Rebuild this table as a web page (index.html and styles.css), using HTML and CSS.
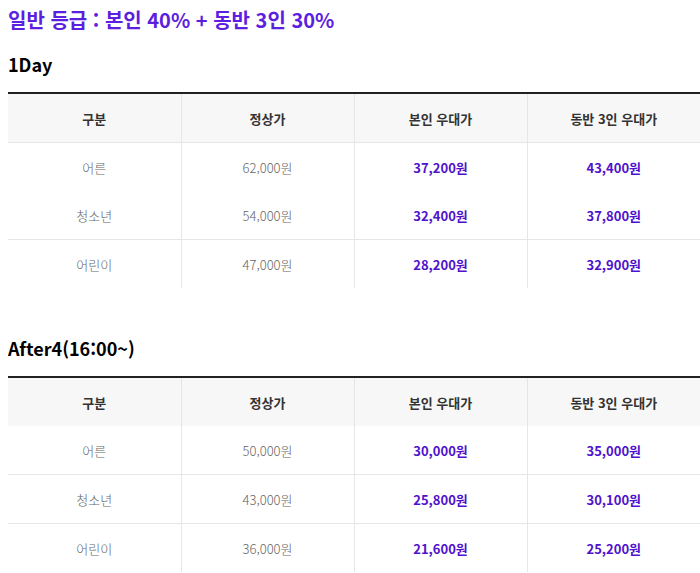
FILE: index.html
```html
<!DOCTYPE html>
<html lang="ko">
<head>
<meta charset="utf-8">
<title>요금 안내</title>
<link rel="stylesheet" href="styles.css">
</head>
<body>
<h2 class="grade-title">일반 등급 : 본인 40% + 동반 3인 30%</h2>

<h3 class="section-title">1Day</h3>
<table class="price-table">
  <thead>
    <tr class="head-row lined">
      <th>구분</th><th>정상가</th><th>본인 우대가</th><th>동반 3인 우대가</th>
    </tr>
  </thead>
  <tbody>
    <tr><td>어른</td><td>62,000원</td><td class="deal">37,200원</td><td class="deal">43,400원</td></tr>
    <tr class="lined"><td>청소년</td><td>54,000원</td><td class="deal">32,400원</td><td class="deal">37,800원</td></tr>
    <tr><td>어린이</td><td>47,000원</td><td class="deal">28,200원</td><td class="deal">32,900원</td></tr>
  </tbody>
</table>

<h3 class="section-title section-title--gap">After4(16:00~)</h3>
<table class="price-table">
  <thead>
    <tr class="head-row">
      <th>구분</th><th>정상가</th><th>본인 우대가</th><th>동반 3인 우대가</th>
    </tr>
  </thead>
  <tbody>
    <tr class="lined"><td>어른</td><td>50,000원</td><td class="deal">30,000원</td><td class="deal">35,000원</td></tr>
    <tr class="lined"><td>청소년</td><td>43,000원</td><td class="deal">25,800원</td><td class="deal">30,100원</td></tr>
    <tr><td>어린이</td><td>36,000원</td><td class="deal">21,600원</td><td class="deal">25,200원</td></tr>
  </tbody>
</table>
</body>
</html>
```

FILE: styles.css
```css
html {
  background: #fff;
  overflow: hidden;
}
body {
  margin: 8px 0 0 8px;
  font-family: "Noto Sans CJK KR", "Noto Sans", sans-serif;
  color: #111;
}
.grade-title {
  margin: 0;
  font-size: 20px;
  line-height: 24px;
  font-weight: 700;
  color: #5c1ee0;
}
.section-title {
  margin: 19px 0 15px;
  font-size: 18px;
  line-height: 26px;
  font-weight: 700;
  color: #000;
}
.section-title--gap {
  margin-top: 47px;
}
.price-table {
  width: 692px;
  border-collapse: collapse;
  table-layout: fixed;
  border-top: 2px solid #222;
}
.price-table th,
.price-table td {
  height: 48px;
  padding: 0;
  text-align: center;
  vertical-align: middle;
  font-size: 13px;
  border-left: 1px solid #e6e6e6;
}
.price-table th:first-child,
.price-table td:first-child {
  border-left: 0;
}
.price-table th {
  background: #f7f7f7;
  font-weight: 700;
  color: #333;
}
.price-table td {
  font-weight: 300;
  color: #666;
}
.price-table td.deal {
  font-weight: 700;
  color: #4f12cc;
}
.price-table tr.lined th,
.price-table tr.lined td {
  border-bottom: 1px solid #e6e6e6;
}
```
